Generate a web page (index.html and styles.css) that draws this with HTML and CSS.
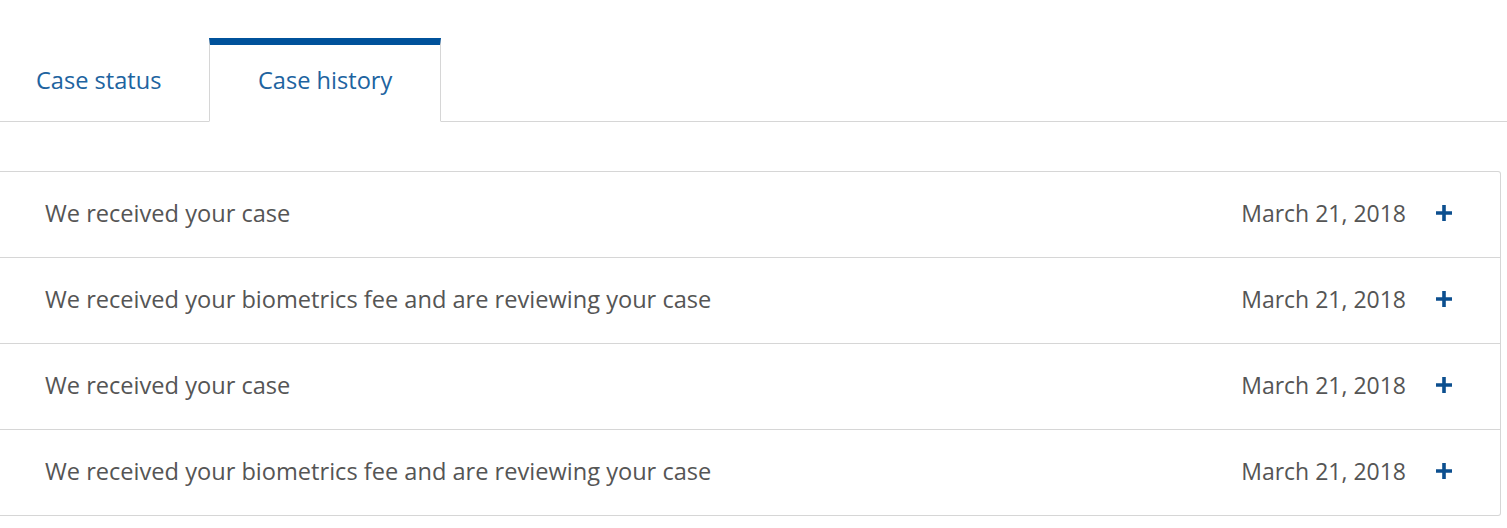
FILE: index.html
```html
<!DOCTYPE html>
<html>
<head>
<meta charset="utf-8">
<link rel="stylesheet" href="styles.css">
</head>
<body>
<div class="page">
  <div class="tabs">
    <div class="tab">Case status</div>
    <div class="tab active">Case history</div>
    <div class="tab-fill"></div>
  </div>
  <div class="history">
    <div class="row">
      <span class="label">We received your case</span>
      <span class="date">March 21, 2018</span>
      <svg class="plus" width="16" height="16" viewBox="0 0 16 16"><path d="M6.2 0h3.6v6.2H16v3.6H9.8V16H6.2V9.8H0V6.2h6.2z" fill="#0c4f8f"/></svg>
    </div>
    <div class="row">
      <span class="label">We received your biometrics fee and are reviewing your case</span>
      <span class="date">March 21, 2018</span>
      <svg class="plus" width="16" height="16" viewBox="0 0 16 16"><path d="M6.2 0h3.6v6.2H16v3.6H9.8V16H6.2V9.8H0V6.2h6.2z" fill="#0c4f8f"/></svg>
    </div>
    <div class="row">
      <span class="label">We received your case</span>
      <span class="date">March 21, 2018</span>
      <svg class="plus" width="16" height="16" viewBox="0 0 16 16"><path d="M6.2 0h3.6v6.2H16v3.6H9.8V16H6.2V9.8H0V6.2h6.2z" fill="#0c4f8f"/></svg>
    </div>
    <div class="row">
      <span class="label">We received your biometrics fee and are reviewing your case</span>
      <span class="date">March 21, 2018</span>
      <svg class="plus" width="16" height="16" viewBox="0 0 16 16"><path d="M6.2 0h3.6v6.2H16v3.6H9.8V16H6.2V9.8H0V6.2h6.2z" fill="#0c4f8f"/></svg>
    </div>
  </div>
</div>
</body>
</html>
```

FILE: styles.css
```css
html, body {
  margin: 0;
  padding: 0;
  background: #fff;
}
body {
  font-family: "Open Sans", "Lato", sans-serif;
}
.page {
  padding-top: 39px;
}
.tabs {
  display: flex;
  align-items: flex-end;
  height: 83px;
}
.tab {
  box-sizing: border-box;
  height: 84px;
  padding-top: 26px;
  font-size: 23.6px;
  line-height: 32px;
  color: #20639f;
  border-bottom: 1px solid #d6d6d6;
}
.tab:first-child {
  width: 209px;
  padding-left: 36px;
}
.tab.active {
  width: 232px;
  padding-left: 48px;
  border-top: 7px solid #00529b;
  padding-top: 19px;
  border-left: 1px solid #d6d6d6;
  border-right: 1px solid #d6d6d6;
  border-bottom: 1px solid transparent;
}
.tab-fill {
  flex: 1;
  height: 84px;
  box-sizing: border-box;
  border-bottom: 1px solid #d6d6d6;
}
.history {
  margin-top: 49px;
  width: 1501px;
  box-sizing: border-box;
  border: 1px solid #d6d6d6;
  border-left: none;
  border-radius: 0 3px 3px 0;
}
.row {
  display: flex;
  align-items: center;
  box-sizing: border-box;
  height: 85px;
  padding: 0 48px 3px 45px;
  border-top: 1px solid #d6d6d6;
  font-size: 23.6px;
  color: #555;
}
.row:first-child {
  height: 85px;
  border-top: none;
}
.row + .row {
  height: 86px;
}
.label {
  flex: 1;
}
.date {
  font-size: 23px;
  margin-right: 30px;
}
.plus {
  display: block;
}
```
